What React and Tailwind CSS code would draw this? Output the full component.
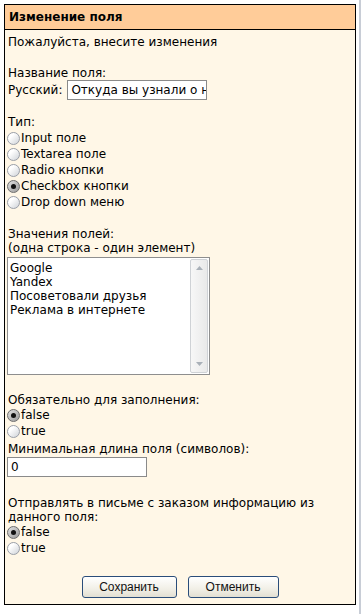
import React from "react";

function Radio({ checked, label }) {
  return (
    <div className="flex items-center h-[16px]">
      {checked ? (
        <span className="relative flex items-center justify-center w-[13px] h-[13px] ml-[-1px] rounded-full border border-[#6e6e6e] bg-[linear-gradient(135deg,#e2e2e2,#9a9a9a)]">
          <span className="w-[5px] h-[5px] rounded-full bg-[#111]" />
        </span>
      ) : (
        <span className="w-[13px] h-[13px] ml-[-1px] rounded-full border border-[#9a9fa8] bg-[linear-gradient(135deg,#ffffff_30%,#cfd3d8)]" />
      )}
      <span className="ml-[1px]">{label}</span>
    </div>
  );
}

function Button({ children, w }) {
  return (
    <div
      className={`flex items-center justify-center h-[22px] rounded-[3px] border border-[#2a4d7a] bg-[linear-gradient(180deg,#ffffff,#f1efe6_60%,#e2dfd2)] font-['Liberation_Sans',Arial,sans-serif] text-[12px] text-[#111] ${w}`}
    >
      {children}
    </div>
  );
}

export default function App() {
  return (
    <div className="relative w-[362px] h-[614px] bg-white font-['DejaVu_Sans',Verdana,sans-serif] text-[12px] leading-[14px] text-black overflow-hidden">
      <div className="flex">
        <div className="ml-[4px] mt-[4px] w-[352px] h-[601px] border border-black bg-[#fff7e7] flex flex-col">
          <div className="h-[25px] bg-[#ffcc99] border-b border-black pl-[4px] flex items-center font-bold">
            Изменение поля
          </div>
          <div className="flex flex-col pl-[3px] pt-[5px]">
            <div>Пожалуйста, внесите изменения</div>
            <div className="mt-[17px]">Название поля:</div>
            <div className="flex items-center h-[20px]">
              <span>Русский:</span>
              <div className="ml-[5px] w-[140px] h-[20px] border border-[#8a8a8a] bg-white pl-[3px] flex items-center overflow-hidden whitespace-nowrap">
                Откуда вы узнали о нас
              </div>
            </div>
            <div className="mt-[15px]">Тип:</div>
            <div className="mt-[1px] flex flex-col">
              <Radio label="Input поле" />
              <Radio label="Textarea поле" />
              <Radio label="Radio кнопки" />
              <Radio checked label="Checkbox кнопки" />
              <Radio label="Drop down меню" />
            </div>
            <div className="mt-[17px]">Значения полей:</div>
            <div>(одна строка - один элемент)</div>
            <div className="mt-[2px] ml-[-1px] w-[203px] h-[118px] border border-[#8e8e8e] bg-white flex">
              <div className="flex-1 pl-[2px] pt-[3px] flex flex-col">
                <div>Google</div>
                <div>Yandex</div>
                <div>Посоветовали друзья</div>
                <div>Реклама в интернете</div>
              </div>
              <div className="w-[18px] my-[1px] mr-[1px] rounded-[2px] border border-[#cfd2d6] bg-[linear-gradient(90deg,#f7f7f7,#e9e9e9)] flex flex-col items-center justify-between py-[6px]">
                <svg width="7" height="4" viewBox="0 0 7 4">
                  <path d="M0 4 L3.5 0 L7 4 Z" fill="#a9b0b8" />
                </svg>
                <svg width="7" height="4" viewBox="0 0 7 4">
                  <path d="M0 0 L3.5 4 L7 0 Z" fill="#a9b0b8" />
                </svg>
              </div>
            </div>
            <div className="mt-[18px]">Обязательно для заполнения:</div>
            <Radio checked label="false" />
            <Radio label="true" />
            <div className="mt-[3px]">Минимальная длина поля (символов):</div>
            <div className="mt-[1px] ml-[-1px] w-[140px] h-[20px] border border-[#8a8a8a] bg-white pl-[3px] flex items-center">
              0
            </div>
            <div className="mt-[19px]">Отправлять в письме с заказом информацию из</div>
            <div>данного поля:</div>
            <Radio checked label="false" />
            <Radio label="true" />
          </div>
          <div className="mt-[20px] flex justify-center gap-[11px]">
            <Button w="w-[95px]">Сохранить</Button>
            <Button w="w-[91px]">Отменить</Button>
          </div>
        </div>
        <div className="ml-[3px] w-[2px] h-[614px] bg-[#c8cdd6]" />
      </div>
    </div>
  );
}
